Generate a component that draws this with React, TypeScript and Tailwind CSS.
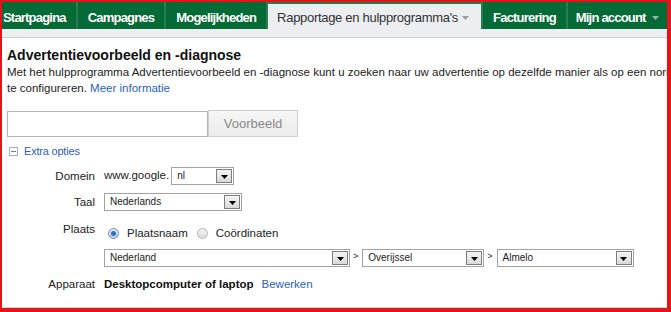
import React from "react";

const tabs = [
  { label: "Startpagina", pad: "pl-[1px] pr-[10px]" },
  { label: "Campagnes", pad: "px-[10px]" },
  { label: "Mogelijkheden", pad: "px-[10px]" },
];

function Arrow({ className }: { className?: string }) {
  return (
    <svg width="7" height="4" viewBox="0 0 7 4" className={className}>
      <path d="M0 0h7L3.5 4z" fill="currentColor" />
    </svg>
  );
}

function Select({ value, width }: { value: string; width: string }) {
  return (
    <div
      className={`${width} h-[18px] border border-[#a3a3a3] bg-white flex items-center justify-between shrink-0`}
    >
      <span className="pl-[5px] text-[10px] text-[#222] leading-none">{value}</span>
      <span className="mr-[1px] w-[16px] h-[14px] border border-[#7d7d7d] bg-gradient-to-b from-[#f6f6f6] to-[#d9d9d9] flex items-end justify-center pb-[3px]">
        <Arrow className="text-black" />
      </span>
    </div>
  );
}

function Radio({ checked, label }: { checked?: boolean; label: string }) {
  return (
    <label className="flex items-center gap-[8px]">
      <span
        className={`w-[11px] h-[11px] rounded-full border flex items-center justify-center ${
          checked
            ? "border-[#7a8ea8] bg-gradient-to-b from-[#e6ecf4] to-[#c4cfdc]"
            : "border-[#b8b8b8] bg-gradient-to-b from-[#f4f4f4] to-[#dcdcdc]"
        }`}
      >
        {checked && <span className="w-[5px] h-[5px] rounded-full bg-[#2f6fc6]" />}
      </span>
      <span className="text-[11.5px] leading-[15px] text-[#222]">{label}</span>
    </label>
  );
}

function Row({ label, children, className }: { label: string; children: React.ReactNode; className?: string }) {
  return (
    <div className={`flex ${className ?? ""}`}>
      <div className="w-[88px] shrink-0 text-right text-[11.5px] text-[#222] leading-[15px]">{label}</div>
      <div className="ml-[9px] flex-1 min-w-0">{children}</div>
    </div>
  );
}

export default function App() {
  return (
    <div className="w-[671px] h-[312px] bg-white border-[#e3141a] border-t-2 border-l-2 border-r-4 border-b-4 overflow-hidden flex flex-col font-['Liberation_Sans',Arial,sans-serif]">
      {/* Tab bar */}
      <div className="h-[27px] shrink-0 flex gap-[2px] bg-[#2a7c4c]">
        {tabs.map((t) => (
          <div
            key={t.label}
            className={`${t.pad} pt-[8px] bg-[#046a36] text-white font-bold text-[13px] leading-[15px] tracking-[-0.8px] whitespace-nowrap`}
          >
            {t.label}
          </div>
        ))}
        <div className="mt-[2px] pl-[9px] pr-[12px] pt-[6px] bg-[#eceef2] text-[#333] text-[13px] leading-[15px] tracking-[-0.3px] whitespace-nowrap flex items-start gap-[4px]">
          Rapportage en hulpprogramma's
          <Arrow className="text-[#9a9a9a] mt-[6px]" />
        </div>
        <div className="px-[10px] pt-[8px] bg-[#046a36] text-white font-bold text-[13px] leading-[15px] tracking-[-0.8px] whitespace-nowrap">
          Facturering
        </div>
        <div className="flex-1 pl-[8px] pt-[8px] bg-[#046a36] text-white font-bold text-[13px] leading-[15px] tracking-[-0.8px] whitespace-nowrap flex items-start gap-[6px]">
          Mijn account
          <Arrow className="text-[#8fb79f] mt-[6px]" />
        </div>
      </div>
      <div className="h-[9px] shrink-0 bg-[#eceef2] border-b border-[#cdd0d6]" />

      {/* Content */}
      <div className="flex-1 pl-[5px] pt-[9px] overflow-hidden border-b border-[#d4d4d4]">
        <h1 className="text-[14px] leading-[17px] font-bold text-[#111]">Advertentievoorbeeld en -diagnose</h1>
        <p className="text-[11.5px] leading-[16px] text-[#222] whitespace-nowrap">
          Met het hulpprogramma Advertentievoorbeeld en -diagnose kunt u zoeken naar uw advertentie op dezelfde manier als op een normale Google-pagina
          <br />
          te configureren. <a className="text-[#2a5fbf]">Meer informatie</a>
        </p>

        <div className="mt-[14px] flex items-end">
          <input className="w-[201px] h-[26px] border border-[#b5b5b5] bg-white outline-none" />
          <button className="w-[90px] h-[27px] border border-[#cfcfcf] bg-gradient-to-b from-[#f6f6f6] to-[#ececec] text-[13px] text-[#8a8a8a]">
            Voorbeeld
          </button>
        </div>

        <div className="mt-[7px] ml-[2px] flex items-center gap-[6px] text-[11px] leading-[14px] text-[#2a5fbf] tracking-[-0.2px]">
          <span className="w-[9px] h-[9px] border border-[#9fb0c8] flex items-center justify-center">
            <span className="w-[5px] h-[1px] bg-[#5e7ca8]" />
          </span>
          Extra opties
        </div>

        <Row label="Domein" className="mt-[9px] items-center">
          <div className="flex items-center gap-[2px]">
            <span className="text-[11.5px] text-[#222]">www.google.</span>
            <Select value="nl" width="w-[63px]" />
          </div>
        </Row>

        <Row label="Taal" className="mt-[8px] items-center">
          <Select value="Nederlands" width="w-[138px]" />
        </Row>

        <Row label="Plaats" className="mt-[11px]">
          <div className="pt-[4px] flex items-center gap-[9px] ml-[4px]">
            <Radio checked label="Plaatsnaam" />
            <Radio label="Coördinaten" />
          </div>
        </Row>

        <Row label="" className="mt-[8px]">
          <div className="flex items-start">
            <Select value="Nederland" width="w-[246px]" />
            <span className="ml-[3px] mr-[4px] text-[9px] leading-[14px] text-[#222]">&gt;</span>
            <Select value="Overijssel" width="w-[122px]" />
            <span className="ml-[3px] mr-[4px] text-[9px] leading-[14px] text-[#222]">&gt;</span>
            <Select value="Almelo" width="w-[137px]" />
          </div>
        </Row>

        <Row label="Apparaat" className="mt-[10px]">
          <div className="flex items-center gap-[8px] text-[11.5px] leading-[15px]">
            <span className="font-bold text-[#111]">Desktopcomputer of laptop</span>
            <a className="text-[#2a5fbf]">Bewerken</a>
          </div>
        </Row>
      </div>
    </div>
  );
}
